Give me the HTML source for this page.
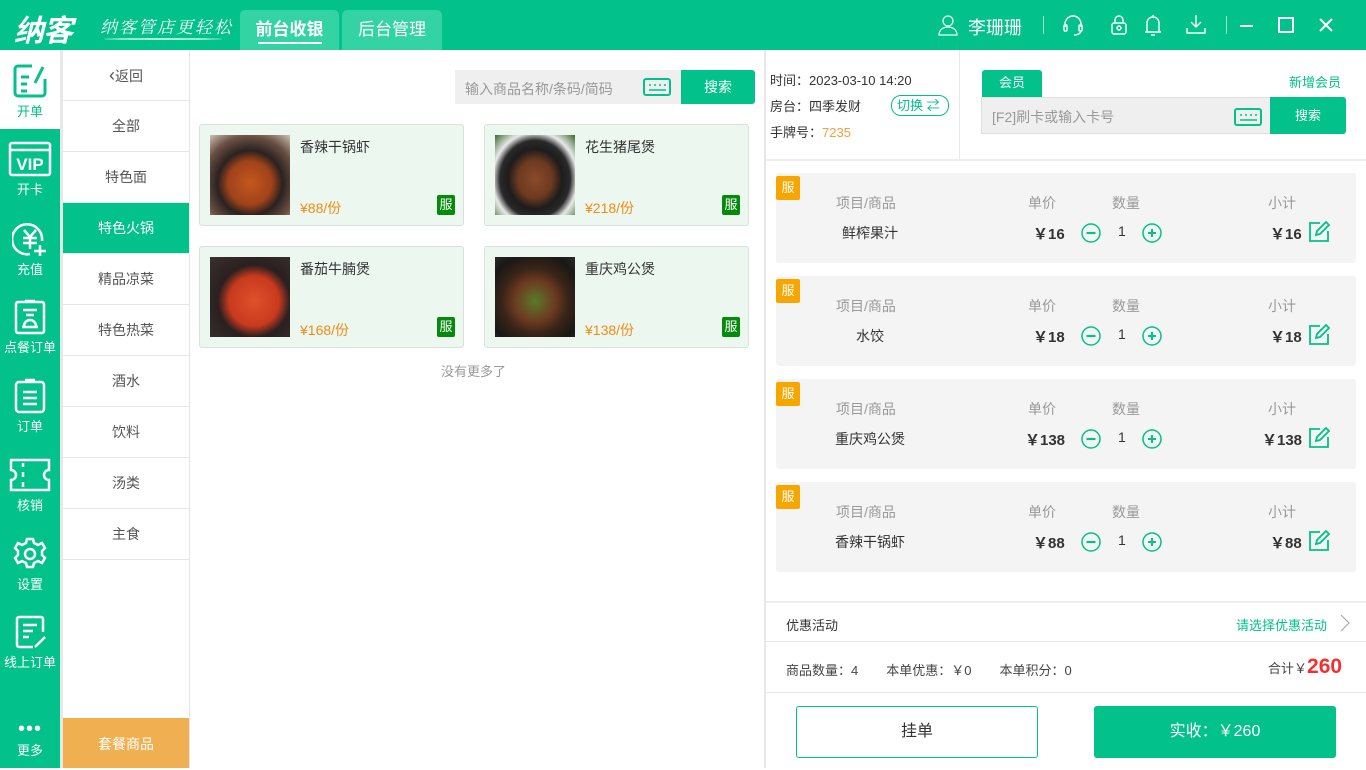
<!DOCTYPE html>
<html><head><meta charset="utf-8"><style>
*{margin:0;padding:0;box-sizing:border-box}
body{width:1366px;height:768px;overflow:hidden;position:relative;background:#fff;font-family:"Liberation Sans","Noto Sans CJK SC",sans-serif;font-size:14px;color:#333}
.a{position:absolute}
.g{color:#02c18b}
#hdr{left:0;top:0;width:1366px;height:50px;background:#02c18b}
.tab{top:10px;height:40px;background:#34d3a3;border-radius:5px 5px 0 0;color:#fff;font-size:17px;text-align:center;line-height:40px}
#side{left:0;top:50px;width:60px;height:718px;background:#02c18b}
.si{left:0;width:60px;text-align:center;color:#fff;font-size:13px}
.si svg{display:block;margin:0 auto 2px}
#cat{left:63px;top:50px;width:127px;height:718px;border-right:1px solid #e6e6e6}
.c{position:absolute;left:0;width:126px;height:51px;line-height:51px;text-align:center;border-bottom:1px solid #e8e8e8;color:#555}
.card{width:265px;height:102px;background:#ebf7ef;border:1px solid #d8e2da;border-radius:3px}
.card .im{position:absolute;left:10px;top:10px;width:80px;height:80px}
.card .n{position:absolute;left:100px;top:12px;font-size:14px;color:#333}
.card .p{position:absolute;left:100px;top:73px;font-size:14px;color:#f08c16}
.card .f{position:absolute;right:8px;top:70px;width:18px;height:20px;background:#068a0b;color:#fff;font-size:13px;text-align:center;line-height:20px;border-radius:2px}
.item{left:776px;width:580px;height:90px;background:#f4f4f4;border-radius:3px}
.item .b{position:absolute;left:0;top:3px;width:24px;height:24px;background:#f7a600;color:#fff;font-size:13px;line-height:24px;text-align:center;border-radius:2px}
.item .h{position:absolute;top:20px;color:#999;font-size:14px}
.item .v{position:absolute;top:50px;font-size:14px;color:#333}
.item .m{font-weight:bold;font-size:15px}
.circ{position:absolute;top:50px}
</style></head><body>
<div id="hdr" class="a"></div>
<div class="a" style="left:14px;top:6px;color:#fff;font-size:30px;font-weight:bold;font-style:italic;letter-spacing:-1px">纳客</div>
<div class="a" style="left:100px;top:13px;color:#fff;font-size:17px;font-style:italic;letter-spacing:2px;font-family:'Noto Serif CJK SC',serif">纳客管店更轻松</div>
<div class="a" style="left:104px;top:38px;width:118px;height:2px;border-radius:50%;background:rgba(255,255,255,.7)"></div>
<div class="a tab" style="left:240px;width:99px;font-weight:bold">前台收银<div class="a" style="left:18px;top:32px;width:64px;height:2px;background:#fff"></div></div>
<div class="a tab" style="left:342px;width:100px">后台管理</div>
<svg class="a" style="left:937px;top:14px" width="22" height="22" viewBox="0 0 22 22" fill="none" stroke="#e6fff5" stroke-width="1.3"><circle cx="11" cy="7" r="5"/><path d="M2 21c0-5 4-8 9-8s9 3 9 8z"/></svg>
<div class="a" style="left:968px;top:14px;color:#fff;font-size:18px">李珊珊</div>
<div class="a" style="left:1043px;top:16px;width:1px;height:18px;background:#9fe3c9"></div>
<svg class="a" style="left:1062px;top:14px" width="22" height="22" viewBox="0 0 22 22" fill="none" stroke="#fff" stroke-width="1.4"><path d="M3 13V10a8 8 0 0 1 16 0v3"/><rect x="2" y="11" width="3" height="6" rx="1"/><rect x="17" y="11" width="3" height="6" rx="1"/><path d="M19 17c0 2-3 4-7 4"/></svg>
<svg class="a" style="left:1109px;top:14px" width="20" height="22" viewBox="0 0 20 22" fill="none" stroke="#fff" stroke-width="1.4"><rect x="3" y="9" width="14" height="11" rx="2"/><path d="M6 9V6a4 4 0 0 1 8 0v3"/><circle cx="10" cy="14" r="2"/></svg>
<svg class="a" style="left:1143px;top:13px" width="20" height="24" viewBox="0 0 20 24" fill="none" stroke="#fff" stroke-width="1.4"><path d="M4 19V10a6 6 0 0 1 12 0v9zM2 19h16M8 22h4M10 2v2"/></svg>
<svg class="a" style="left:1185px;top:13px" width="22" height="22" viewBox="0 0 22 22" fill="none" stroke="#fff" stroke-width="1.4"><path d="M11 2v12M6 9l5 5 5-5M2 15v5h18v-5"/></svg>
<div class="a" style="left:1226px;top:16px;width:1px;height:18px;background:#9fe3c9"></div>
<div class="a" style="left:1240px;top:25px;width:13px;height:2px;background:#fff"></div>
<div class="a" style="left:1278px;top:17px;width:16px;height:16px;border:2px solid #fff"></div>
<svg class="a" style="left:1319px;top:18px" width="14" height="14" viewBox="0 0 14 14" stroke="#fff" stroke-width="2"><path d="M1 1l12 12M13 1L1 13"/></svg>

<div id="side" class="a"></div>
<div class="a" style="left:60px;top:50px;width:3px;height:718px;background:#e8e8e8"></div>
<div class="a si" style="top:50px;height:79px;background:#fff;color:#02c18b;padding-top:13px">
<svg width="36" height="36" viewBox="0 0 36 36" fill="none" stroke="#02c18b" stroke-width="3"><path d="M20 3H6a3 3 0 0 0-3 3v24a3 3 0 0 0 3 3h24a3 3 0 0 0 3-3V16"/><path d="M9 14h8M9 21h6M9 28h6M31 4l-8 16"/></svg>开单</div>
<div class="a si" style="top:141px"><svg width="44" height="36" viewBox="0 0 44 36" fill="none" stroke="#fff" stroke-width="2.5"><rect x="2" y="2" width="40" height="32" rx="2"/><path d="M2 9h40"/><text x="22" y="29" font-size="17" font-weight="bold" fill="#fff" stroke="none" text-anchor="middle" font-family="Liberation Sans">VIP</text></svg>开卡</div>
<div class="a si" style="top:221px"><svg width="36" height="36" viewBox="0 0 36 36" fill="none" stroke="#fff" stroke-width="2.5"><path d="M30 20A15 15 0 1 0 18 33"/><path d="M12 9l6 7 6-7M11 17h14M11 22h14M18 16v12M28 24v11M22 30h12"/></svg>充值</div>
<div class="a si" style="top:299px"><svg width="34" height="36" viewBox="0 0 34 36" fill="none" stroke="#fff" stroke-width="2.5"><rect x="3" y="3" width="28" height="31" rx="2"/><path d="M12 2h10M10 11h14M13 16h8M9 28h16M11 27a6 6 0 0 1 12 0"/></svg>点餐订单</div>
<div class="a si" style="top:378px"><svg width="34" height="36" viewBox="0 0 34 36" fill="none" stroke="#fff" stroke-width="2.5"><rect x="3" y="4" width="28" height="30" rx="3"/><path d="M12 2h10M10 14h14M10 20h14M10 26h14"/></svg>订单</div>
<div class="a si" style="top:457px"><svg width="44" height="36" viewBox="0 0 44 36" fill="none" stroke="#fff" stroke-width="2.5"><path d="M3 3h38v10a5 5 0 0 0 0 10v10H3V23a5 5 0 0 0 0-10z"/><path d="M15 6v4M15 15v5M15 25v5"/></svg>核销</div>
<div class="a si" style="top:536px"><svg width="36" height="36" viewBox="0 0 36 36" fill="none" stroke="#fff" stroke-width="2.5"><path d="M15 3h6l1 4 4 2 4-2 3 5-3 3v4l3 3-3 5-4-2-4 2-1 4h-6l-1-4-4-2-4 2-3-5 3-3v-4l-3-3 3-5 4 2 4-2z"/><circle cx="18" cy="18" r="5"/></svg>设置</div>
<div class="a si" style="top:614px"><svg width="34" height="36" viewBox="0 0 34 36" fill="none" stroke="#fff" stroke-width="2.5"><path d="M30 18V5a2 2 0 0 0-2-2H6a2 2 0 0 0-2 2v26a2 2 0 0 0 2 2h14"/><path d="M10 11h14M10 17h10M10 23h6M22 33l10-10"/></svg>线上订单</div>
<div class="a si" style="top:722px;font-size:20px;line-height:14px;letter-spacing:1px">•••</div>
<div class="a si" style="top:740px">更多</div>

<div id="cat" class="a">
<div class="c" style="top:0"><span style="font-size:18px;color:#555">‹</span>返回</div>
<div class="c" style="top:51px">全部</div>
<div class="c" style="top:102px">特色面</div>
<div class="c" style="top:153px;background:#02c18b;color:#fff">特色火锅</div>
<div class="c" style="top:204px">精品凉菜</div>
<div class="c" style="top:255px">特色热菜</div>
<div class="c" style="top:306px">酒水</div>
<div class="c" style="top:357px">饮料</div>
<div class="c" style="top:408px">汤类</div>
<div class="c" style="top:459px">主食</div>
<div class="c" style="top:668px;height:50px;line-height:52px;background:#f0b052;color:#fff;border:none">套餐商品</div>
</div>

<div class="a" style="left:455px;top:70px;width:226px;height:34px;background:#efefef"></div>
<div class="a" style="left:465px;top:79px;color:#999;font-size:14px">输入商品名称/条码/简码</div>
<svg class="a" style="left:643px;top:78px" width="28" height="18" viewBox="0 0 28 18" fill="none" stroke="#02c18b" stroke-width="2"><rect x="1" y="1" width="26" height="16" rx="2"/><path d="M6 7h2M11 7h2M16 7h2M21 7h2M6 12h17" stroke-width="1.6"/></svg>
<div class="a" style="left:681px;top:70px;width:74px;height:34px;background:#02c18b;color:#fff;text-align:center;line-height:34px;border-radius:0 3px 3px 0">搜索</div>

<div class="a card" style="left:199px;top:124px"><div class="im" style="background:radial-gradient(circle at 50% 60%,#c4571e 0,#a0421a 35%,#2a2220 52%,#6b5044 75%,#cfc3b5 100%)"></div><div class="n">香辣干锅虾</div><div class="p">¥88/份</div><div class="f">服</div></div>
<div class="a card" style="left:484px;top:124px"><div class="im" style="background:radial-gradient(ellipse at 50% 55%,#8b4a2a 0,#6d3a20 30%,#1e1c1c 48%,#2a2a2a 62%,#e8e8e8 75%,#3a6a2a 100%)"></div><div class="n">花生猪尾煲</div><div class="p">¥218/份</div><div class="f">服</div></div>
<div class="a card" style="left:199px;top:246px"><div class="im" style="background:radial-gradient(circle at 55% 55%,#e0502a 0,#c93a1e 40%,#2a2020 58%,#3a3030 100%)"></div><div class="n">番茄牛腩煲</div><div class="p">¥168/份</div><div class="f">服</div></div>
<div class="a card" style="left:484px;top:246px"><div class="im" style="background:radial-gradient(circle at 50% 55%,#5a7a2a 0,#6b3a20 35%,#3a2418 55%,#1a1816 80%,#2a2a2a 100%)"></div><div class="n">重庆鸡公煲</div><div class="p">¥138/份</div><div class="f">服</div></div>
<div class="a" style="left:441px;top:361px;color:#999;font-size:13px">没有更多了</div>

<div class="a" style="left:764px;top:50px;width:2px;height:718px;background:#e8e8e8"></div>
<div class="a" style="left:770px;top:68px;font-size:13px;line-height:26px;color:#333">时间：2023-03-10 14:20<br>房台：四季发财<br>手牌号：<span style="color:#f0a040">7235</span></div>
<div class="a" style="left:891px;top:95px;width:58px;height:21px;border:1px solid #02c18b;border-radius:10px;color:#02c18b;font-size:13px;line-height:19px;padding-left:5px">切换 ⇄</div>
<div class="a" style="left:959px;top:50px;width:1px;height:110px;background:#e8e8e8"></div>
<div class="a" style="left:766px;top:159px;width:600px;height:2px;background:#eee"></div>
<div class="a" style="left:982px;top:70px;width:60px;height:28px;background:#02c18b;border-radius:3px 3px 0 0;color:#fff;text-align:center;line-height:26px;font-size:13px">会员</div>
<div class="a g" style="left:1289px;top:72px;font-size:13px">新增会员</div>
<div class="a" style="left:981px;top:97px;width:290px;height:37px;background:#efefef;border:1px solid #e0e0e0"></div>
<div class="a" style="left:992px;top:107px;color:#999;font-size:14px">[F2]刷卡或输入卡号</div>
<svg class="a" style="left:1234px;top:108px" width="28" height="18" viewBox="0 0 28 18" fill="none" stroke="#02c18b" stroke-width="2"><rect x="1" y="1" width="26" height="16" rx="2"/><path d="M6 7h2M11 7h2M16 7h2M21 7h2M6 12h17" stroke-width="1.6"/></svg>
<div class="a" style="left:1270px;top:97px;width:76px;height:37px;background:#02c18b;color:#fff;text-align:center;line-height:37px;border-radius:0 3px 3px 0;font-size:13px">搜索</div>

<div class="a item" style="top:173px"><div class="b">服</div><div class="h" style="left:60px">项目/商品</div><div class="h" style="left:252px">单价</div><div class="h" style="left:336px">数量</div><div class="h" style="left:492px">小计</div>
<div class="v" style="left:66px">鲜榨果汁</div><div class="v m" style="left:257px">￥16</div><svg class="circ" style="left:305px" width="20" height="20" viewBox="0 0 20 20" fill="none" stroke="#02c18b" stroke-width="1.5"><circle cx="10" cy="10" r="9"/><path d="M5.5 10h9" stroke-width="2.2"/></svg><div class="v" style="left:342px">1</div><svg class="circ" style="left:366px" width="20" height="20" viewBox="0 0 20 20" fill="none" stroke="#02c18b" stroke-width="1.5"><circle cx="10" cy="10" r="9"/><path d="M6 10h8M10 6v8" stroke-width="2"/></svg><div class="v m" style="left:494px">￥16</div>
<svg class="a" style="left:532px;top:48px" width="22" height="22" viewBox="0 0 22 22" fill="none" stroke="#02c18b" stroke-width="1.8"><path d="M12 2H2v18h18V10"/><path d="M8 14l1-4 9-9 3 3-9 9z"/></svg></div>
<div class="a item" style="top:276px"><div class="b">服</div><div class="h" style="left:60px">项目/商品</div><div class="h" style="left:252px">单价</div><div class="h" style="left:336px">数量</div><div class="h" style="left:492px">小计</div>
<div class="v" style="left:80px">水饺</div><div class="v m" style="left:257px">￥18</div><svg class="circ" style="left:305px" width="20" height="20" viewBox="0 0 20 20" fill="none" stroke="#02c18b" stroke-width="1.5"><circle cx="10" cy="10" r="9"/><path d="M5.5 10h9" stroke-width="2.2"/></svg><div class="v" style="left:342px">1</div><svg class="circ" style="left:366px" width="20" height="20" viewBox="0 0 20 20" fill="none" stroke="#02c18b" stroke-width="1.5"><circle cx="10" cy="10" r="9"/><path d="M6 10h8M10 6v8" stroke-width="2"/></svg><div class="v m" style="left:494px">￥18</div>
<svg class="a" style="left:532px;top:48px" width="22" height="22" viewBox="0 0 22 22" fill="none" stroke="#02c18b" stroke-width="1.8"><path d="M12 2H2v18h18V10"/><path d="M8 14l1-4 9-9 3 3-9 9z"/></svg></div>
<div class="a item" style="top:379px"><div class="b">服</div><div class="h" style="left:60px">项目/商品</div><div class="h" style="left:252px">单价</div><div class="h" style="left:336px">数量</div><div class="h" style="left:492px">小计</div>
<div class="v" style="left:59px">重庆鸡公煲</div><div class="v m" style="left:249px">￥138</div><svg class="circ" style="left:305px" width="20" height="20" viewBox="0 0 20 20" fill="none" stroke="#02c18b" stroke-width="1.5"><circle cx="10" cy="10" r="9"/><path d="M5.5 10h9" stroke-width="2.2"/></svg><div class="v" style="left:342px">1</div><svg class="circ" style="left:366px" width="20" height="20" viewBox="0 0 20 20" fill="none" stroke="#02c18b" stroke-width="1.5"><circle cx="10" cy="10" r="9"/><path d="M6 10h8M10 6v8" stroke-width="2"/></svg><div class="v m" style="left:486px">￥138</div>
<svg class="a" style="left:532px;top:48px" width="22" height="22" viewBox="0 0 22 22" fill="none" stroke="#02c18b" stroke-width="1.8"><path d="M12 2H2v18h18V10"/><path d="M8 14l1-4 9-9 3 3-9 9z"/></svg></div>
<div class="a item" style="top:482px"><div class="b">服</div><div class="h" style="left:60px">项目/商品</div><div class="h" style="left:252px">单价</div><div class="h" style="left:336px">数量</div><div class="h" style="left:492px">小计</div>
<div class="v" style="left:59px">香辣干锅虾</div><div class="v m" style="left:257px">￥88</div><svg class="circ" style="left:305px" width="20" height="20" viewBox="0 0 20 20" fill="none" stroke="#02c18b" stroke-width="1.5"><circle cx="10" cy="10" r="9"/><path d="M5.5 10h9" stroke-width="2.2"/></svg><div class="v" style="left:342px">1</div><svg class="circ" style="left:366px" width="20" height="20" viewBox="0 0 20 20" fill="none" stroke="#02c18b" stroke-width="1.5"><circle cx="10" cy="10" r="9"/><path d="M6 10h8M10 6v8" stroke-width="2"/></svg><div class="v m" style="left:494px">￥88</div>
<svg class="a" style="left:532px;top:48px" width="22" height="22" viewBox="0 0 22 22" fill="none" stroke="#02c18b" stroke-width="1.8"><path d="M12 2H2v18h18V10"/><path d="M8 14l1-4 9-9 3 3-9 9z"/></svg></div>

<div class="a" style="left:766px;top:601px;width:600px;height:2px;background:#eee"></div>
<div class="a" style="left:786px;top:615px;font-size:13px;color:#333">优惠活动</div>
<div class="a g" style="left:1236px;top:615px;font-size:13px">请选择优惠活动</div>
<svg class="a" style="left:1340px;top:614px" width="10" height="18" viewBox="0 0 10 18" fill="none" stroke="#aaa" stroke-width="1.2"><path d="M1 1l8 8-8 8"/></svg>
<div class="a" style="left:766px;top:641px;width:600px;height:1px;background:#e8e8e8"></div>
<div class="a" style="left:786px;top:660px;font-size:13px;color:#444">商品数量：4<span style="display:inline-block;width:28px"></span>本单优惠：￥0<span style="display:inline-block;width:28px"></span>本单积分：0</div>
<div class="a" style="left:1268px;top:655px;font-size:13px;color:#444">合计￥<span style="color:#f23030;font-size:21px;font-weight:bold">260</span></div>
<div class="a" style="left:766px;top:692px;width:600px;height:1px;background:#e8e8e8"></div>
<div class="a" style="left:796px;top:706px;width:242px;height:52px;border:1px solid #02c18b;border-radius:3px;text-align:center;line-height:50px;font-size:16px">挂单</div>
<div class="a" style="left:1094px;top:706px;width:242px;height:52px;background:#02c18b;border-radius:3px;text-align:center;line-height:52px;font-size:16px;color:#fff">实收：￥260</div>
</body></html>
